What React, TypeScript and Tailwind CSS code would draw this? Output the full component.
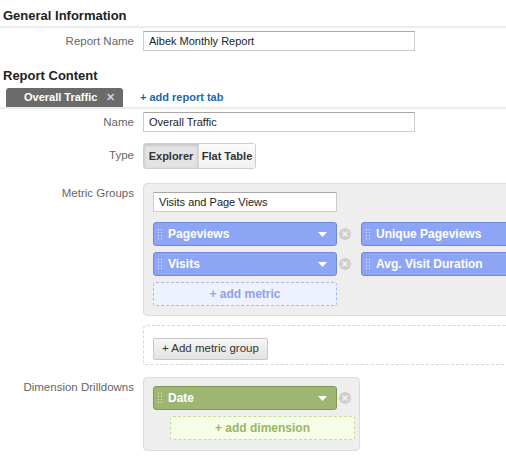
import React from "react";

const font = { fontFamily: '"Liberation Sans", Arial, sans-serif' };

function Grip() {
  return (
    <svg width="4" height="12" viewBox="0 0 4 12" className="shrink-0">
      {[0, 1, 2, 3].map((r) =>
        [0, 1].map((c) => (
          <rect key={`${r}-${c}`} x={c * 3} y={r * 3 + 1} width="1" height="1" fill="rgba(255,255,255,0.85)" />
        )),
      )}
    </svg>
  );
}

function Caret() {
  return (
    <svg width="9" height="5" viewBox="0 0 9 5" className="shrink-0">
      <path d="M0 0h9L4.5 5z" fill="#fff" />
    </svg>
  );
}

function RemoveIcon() {
  return (
    <svg width="12" height="12" viewBox="0 0 12 12" className="shrink-0">
      <circle cx="6" cy="6" r="6" fill="#cfcfcf" />
      <path d="M3.8 3.8l4.4 4.4M8.2 3.8l-4.4 4.4" stroke="#f2f2f2" strokeWidth="1.6" />
    </svg>
  );
}

function Chip({ label, color, caret = true }: { label: string; color: "blue" | "green"; caret?: boolean }) {
  const cls =
    color === "blue"
      ? "bg-[#8da5f4] border-[#6f87dc]"
      : "bg-[#9db672] border-[#7e9a52]";
  return (
    <div className={`flex items-center h-[24px] w-[184px] shrink-0 rounded-[3px] border ${cls} pl-[4px] pr-[9px]`}>
      <Grip />
      <span className="ml-[6px] text-[12px] font-bold text-white flex-1 whitespace-nowrap">{label}</span>
      {caret && <Caret />}
    </div>
  );
}

function Label({ children, className = "" }: { children: React.ReactNode; className?: string }) {
  return (
    <div className={`w-[134px] shrink-0 text-right text-[11.5px] leading-[20px] text-[#666] ${className}`}>
      {children}
    </div>
  );
}

function TextInput({ value, width = "w-[272px]" }: { value: string; width?: string }) {
  return (
    <div
      className={`${width} h-[20px] bg-white border border-[#cccccc] border-t-[#a8a8a8] px-[5px] text-[11px] leading-[18px] text-[#222]`}
    >
      {value}
    </div>
  );
}

export default function App() {
  return (
    <div className="w-[506px] h-[460px] overflow-hidden bg-white text-[#222]" style={font}>
      <div className="border-b-2 border-[#ececec] pt-[8px] pb-[2px] pl-[3px] h-[28px]">
        <h2 className="text-[13px] font-bold leading-[16px] text-[#222]">General Information</h2>
      </div>

      <div className="flex mt-[3px]">
        <Label>Report Name</Label>
        <div className="ml-[9px]">
          <TextInput value="Aibek Monthly Report" />
        </div>
      </div>

      <h2 className="mt-[17px] pl-[3px] text-[13px] font-bold leading-[16px] text-[#222]">Report Content</h2>

      <div className="mt-[4px] flex items-end border-b-2 border-[#ececec] h-[21px]">
        <div className="ml-[6px] w-[117px] h-[19px] bg-[#6b6b6b] rounded-t-[3px] flex items-center pl-[18px] text-[11px] font-bold text-white">
          <span>Overall Traffic</span>
          <span className="ml-[9px] text-[#cfcfcf] text-[11px]">✕</span>
        </div>
        <span className="ml-[17px] mb-[1px] text-[11px] font-bold text-[#2266aa] self-center">+ add report tab</span>
      </div>

      <div className="flex mt-[3px]">
        <Label>Name</Label>
        <div className="ml-[9px]">
          <TextInput value="Overall Traffic" />
        </div>
      </div>

      <div className="flex mt-[11px]">
        <Label className="mt-[2px]">Type</Label>
        <div className="ml-[9px] flex h-[26px] w-[113px] rounded-[3px] border border-[#cfcfcf] overflow-hidden text-[11px] font-bold text-[#333]">
          <div className="w-[55px] flex items-center justify-center bg-[#e3e3e3] shadow-[inset_0_1px_3px_rgba(0,0,0,0.18)] border-r border-[#d6d6d6]">
            Explorer
          </div>
          <div className="flex-1 flex items-center justify-center bg-gradient-to-b from-[#fbfbfb] to-[#f1f1f1]">
            Flat Table
          </div>
        </div>
      </div>

      <div className="flex mt-[14px]">
        <Label>Metric Groups</Label>
        <div className="ml-[9px] w-[460px] shrink-0 rounded-[4px] border border-[#dcdcdc] bg-[#eeeeee] pl-[9px] pt-[8px] pb-[9px]">
          <div className="bg-white w-[184px] h-[20px] border border-[#cccccc] border-t-[#a8a8a8] px-[5px] text-[11px] leading-[18px] text-[#222]">
            Visits and Page Views
          </div>
          <div className="mt-[10px] flex flex-col gap-[6px]">
            <div className="flex items-center">
              <Chip label="Pageviews" color="blue" />
              <div className="ml-[2px] mr-[10px]"><RemoveIcon /></div>
              <Chip label="Unique Pageviews" color="blue" caret={false} />
            </div>
            <div className="flex items-center">
              <Chip label="Visits" color="blue" />
              <div className="ml-[2px] mr-[10px]"><RemoveIcon /></div>
              <Chip label="Avg. Visit Duration" color="blue" caret={false} />
            </div>
            <div className="w-[184px] h-[24px] rounded-[3px] border border-dashed border-[#a9b8ec] bg-[#eef2fe] flex items-center justify-center text-[12px] font-bold text-[#8ea2e6]">
              + add metric
            </div>
          </div>
        </div>
      </div>

      <div className="flex mt-[9px]">
        <div className="w-[143px] shrink-0" />
        <div className="w-[460px] shrink-0 h-[40px] rounded-[4px] border border-dashed border-[#d6d6d6] pl-[9px] pt-[9px]">
          <div className="inline-flex items-center h-[22px] px-[8px] rounded-[2px] border border-[#c8c8c8] bg-gradient-to-b from-[#f6f6f6] to-[#e2e2e2] text-[11.5px] text-[#333]">
            + Add metric group
          </div>
        </div>
      </div>

      <div className="flex mt-[12px]">
        <Label>Dimension Drilldowns</Label>
        <div className="ml-[9px] w-[217px] shrink-0 rounded-[4px] border border-[#dcdcdc] bg-[#eeeeee] pl-[9px] pt-[8px] pb-[10px]">
          <div className="flex items-center">
            <Chip label="Date" color="green" />
            <div className="ml-[2px]"><RemoveIcon /></div>
          </div>
          <div className="mt-[6px] ml-[17px] w-[185px] h-[24px] rounded-[3px] border border-dashed border-[#c6d99c] bg-[#f5fde6] flex items-center justify-center text-[12px] font-bold text-[#9bb56b]">
            + add dimension
          </div>
        </div>
      </div>
    </div>
  );
}
